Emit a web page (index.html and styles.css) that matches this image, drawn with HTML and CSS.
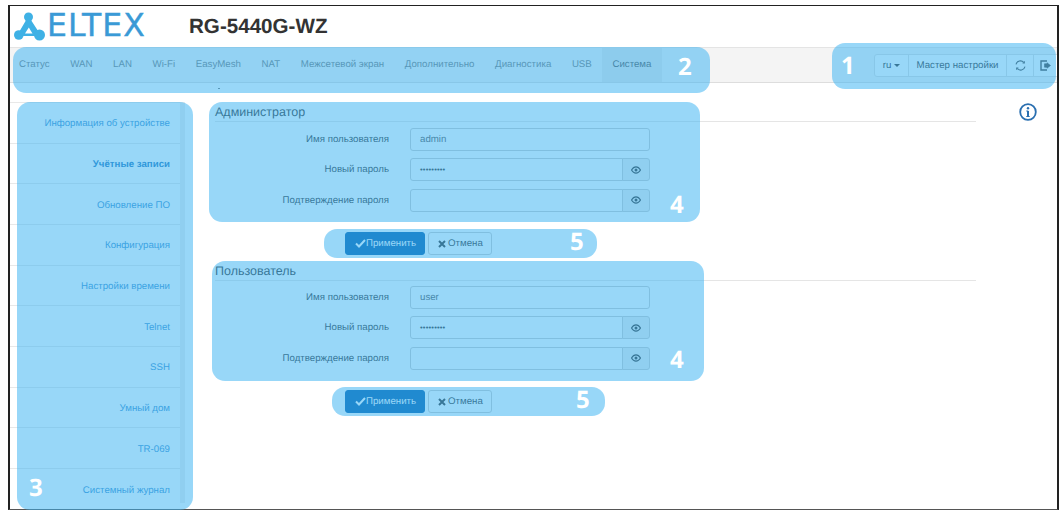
FILE: index.html
```html
<!DOCTYPE html>
<html lang="ru">
<head>
<meta charset="utf-8">
<title>RG-5440G-WZ</title>
<link rel="stylesheet" href="styles.css">
</head>
<body>
<div class="frame">
  <header class="top">
    <div class="logo">
      <svg class="logo-mark" width="32" height="29" viewBox="0 0 32 29">
        <path d="M14.500 6 L4.500 23 H25.500 Z" fill="#3fb1e5" stroke="#3fb1e5" stroke-width="2" stroke-linejoin="round"/>
        <path d="M14.800 15.500 11 21.500H18.500Z" fill="#fff"/>
        <g fill="#3fb1e5"><circle cx="14.500" cy="5" r="4.500"/><circle cx="4.800" cy="23" r="4.800"/><circle cx="25.500" cy="23" r="5.500"/></g>
      </svg>
      <span class="logo-text">ELTEX</span>
    </div>
    <h1 class="model">RG-5440G-WZ</h1>
  </header>

  <nav class="navbar">
    <ul class="tabs">
      <li>Статус</li><li>WAN</li><li>LAN</li><li>Wi-Fi</li><li>EasyMesh</li><li>NAT</li><li>Межсетевой экран</li><li>Дополнительно</li><li>Диагностика</li><li>USB</li><li class="active">Система</li>
    </ul>
    <div class="tools">
      <span class="tool lang">ru <i class="caret"></i></span>
      <span class="tool wizard">Мастер настройки</span>
      <span class="tool icon refresh">
        <svg width="11" height="11" viewBox="0 0 11 11" fill="none" stroke="#444" stroke-width="1.100"><path d="M1 4.300A4.500 4.500 0 0 1 8.800 2.500"/><path d="M10 6.700A4.500 4.500 0 0 1 2.200 8.500"/><path d="M9.300 1.300v1.700H7.600"/><path d="M1.700 9.700V8h1.700"/></svg>
      </span>
      <span class="tool icon logout">
        <svg width="12" height="11" viewBox="0 0 12 11" fill="none" stroke="#444" stroke-width="1.400"><path d="M7 1H1v9h6"/><path d="M7 3.800v-1l3.500 2.700L7 8.200v-1H4.500V3.800Z" fill="#444" stroke-width=".6"/></svg>
      </span>
    </div>
  </nav>

  <div class="main">
    <i class="speck"></i>
    <aside class="side">
      <a>Информация об устройстве</a>
      <a class="current">Учётные записи</a>
      <a>Обновление ПО</a>
      <a>Конфигурация</a>
      <a>Настройки времени</a>
      <a>Telnet</a>
      <a>SSH</a>
      <a>Умный дом</a>
      <a>TR-069</a>
      <a>Системный журнал</a>
    </aside>

    <section class="content">
      <form class="panel">
        <h2 class="legend">Администратор</h2>
        <div class="row"><label>Имя пользователя</label><div class="field">admin</div></div>
        <div class="row"><label>Новый пароль</label><div class="group"><div class="field dots">•••••••••</div><span class="addon"><svg class="eye" width="10" height="8" viewBox="0 0 10 8"><use href="#eye"/></svg></span></div></div>
        <div class="row"><label>Подтверждение пароля</label><div class="group"><div class="field"></div><span class="addon"><svg class="eye" width="10" height="8" viewBox="0 0 10 8"><use href="#eye"/></svg></span></div></div>
        <div class="actions">
          <span class="btn primary"><svg width="11" height="9" viewBox="0 0 11 9" fill="none" stroke="#fff" stroke-width="2"><path d="M1 4.500 4 7.500 10 1"/></svg>Применить</span>
          <span class="btn"><svg width="8" height="8" viewBox="0 0 8 8" fill="none" stroke="#333" stroke-width="2"><path d="M1 1 7 7M7 1 1 7"/></svg>Отмена</span>
        </div>
      </form>
      <form class="panel second">
        <h2 class="legend">Пользователь</h2>
        <div class="row"><label>Имя пользователя</label><div class="field">user</div></div>
        <div class="row"><label>Новый пароль</label><div class="group"><div class="field dots">•••••••••</div><span class="addon"><svg class="eye" width="10" height="8" viewBox="0 0 10 8"><use href="#eye"/></svg></span></div></div>
        <div class="row"><label>Подтверждение пароля</label><div class="group"><div class="field"></div><span class="addon"><svg class="eye" width="10" height="8" viewBox="0 0 10 8"><use href="#eye"/></svg></span></div></div>
        <div class="actions">
          <span class="btn primary"><svg width="11" height="9" viewBox="0 0 11 9" fill="none" stroke="#fff" stroke-width="2"><path d="M1 4.500 4 7.500 10 1"/></svg>Применить</span>
          <span class="btn"><svg width="8" height="8" viewBox="0 0 8 8" fill="none" stroke="#333" stroke-width="2"><path d="M1 1 7 7M7 1 1 7"/></svg>Отмена</span>
        </div>
      </form>
    </section>

    <svg class="info" width="18" height="18" viewBox="0 0 18 18" fill="none">
      <circle cx="9" cy="9" r="7.800" stroke="#2a6fb0" stroke-width="1.800"/>
      <circle cx="9" cy="5.200" r="1.200" fill="#2a6fb0"/>
      <path d="M9 8v5.500" stroke="#2a6fb0" stroke-width="2"/><path d="M7.300 8h2M7.300 13.500h3.400" stroke="#2a6fb0" stroke-width="1"/>
    </svg>
  </div>

  <svg class="defs" width="0" height="0"><defs><g id="eye"><path d="M.5 4C2 1.500 3.500.8 5 .8S8 1.500 9.500 4C8 6.500 6.500 7.200 5 7.200S2 6.500.5 4Z" fill="none" stroke="#333" stroke-width="1.200"/><circle cx="5" cy="4" r="1.500" fill="#333"/></g></defs></svg>
</div>

<div class="mark mark-1"><b>1</b></div>
<div class="mark mark-2"><b>2</b></div>
<div class="mark mark-3"><b>3</b></div>
<div class="mark mark-4a"><b>4</b></div>
<div class="mark mark-5a"><b>5</b></div>
<div class="mark mark-4b"><b>4</b></div>
<div class="mark mark-5b"><b>5</b></div>
</body>
</html>
```
FILE: styles.css
```css
* { box-sizing: border-box; }
html, body { margin: 0; padding: 0; background: #fff; }
body {
  width: 1063px; height: 511px; overflow: hidden; position: relative;
  font-family: "Liberation Sans", Arial, sans-serif; font-size: 9.700px; color: #333;
  text-rendering: geometricPrecision;
}
.frame {
  position: absolute; left: 8px; top: 5px; width: 1051px; height: 505px;
  border: 1px solid #222; border-bottom-color: #555; border-right-width: 2px; border-left-width: 2px; overflow: hidden;
}
.top { height: 41px; display: flex; align-items: center; padding: 0 0 0 4px; }
.logo { width: 175px; flex: none; display: flex; align-items: center; gap: 1px; }
.logo-mark { flex: none; }
.logo-text { font-family: "DejaVu Sans", sans-serif; font-size: 31.500px; letter-spacing: 1px; color: #3a9ad6; line-height: 1; -webkit-text-stroke: .4px #3a9ad6; }
.model { margin: 0; font-size: 20.600px; font-weight: bold; color: #333; }
.navbar {
  height: 36px; background: #f4f4f4; border-top: 1px solid #e4e4e4; border-bottom: 1px solid #ddd;
  display: flex; justify-content: space-between; align-items: stretch;
}
.tabs { list-style: none; margin: 0; padding: 0; display: flex; }
.tabs li { padding: 0 10.300px; line-height: 34px; color: #777; white-space: nowrap; }
.tabs li:first-child { padding-left: 9px; }
.tabs li.active { background: #e7e7e7; color: #555; }
.tools { display: flex; align-items: center; height: 34px; }
.tool {
  height: 23px; display: flex; align-items: center; justify-content: center; background: #fff; border: 1px solid #ddd; margin-left: -1px; color: #333; white-space: nowrap;
}
.lang { width: 35px; border-radius: 3px 0 0 3px; }
.wizard { width: 99px; }
.refresh { width: 28px; }
.logout { width: 24px; border-right: 0; }
.caret { display: inline-block; margin-left: 3px; border: 3px solid transparent; border-top-color: #333; border-bottom: 0; }
.main { display: flex; position: relative; height: 423px; }
.speck { position: absolute; left: 208px; top: 5px; width: 2px; height: 1px; background: #777; }
.side { width: 175px; height: 401px; flex: none; margin-top: 19px; border-right: 5px solid #eee; border-top: 1px solid #e8e8e8; display: flex; flex-direction: column; }
.side a {
  height: 40.670px; flex: none; display: flex; align-items: center; justify-content: flex-end;
  padding: 2px 10px 0 0; color: #3a8fd0; border-bottom: 1px solid #e8e8e8;
}
.side a:last-child { border-bottom: 0; }
.side a.current { font-weight: bold; color: #1e78c0; }
.content { width: 791px; flex: none; padding: 17px 0 0 30px; }
.panel { display: flex; flex-direction: column; }
.panel.second { margin-top: 3.500px; }
.legend { margin: 0 0 5.500px; height: 22px; padding-top: 3px; border-bottom: 1px solid #e5e5e5; font-size: 12.500px; font-weight: normal; color: #333; line-height: 18px; }
.second .legend { margin-bottom: 5px; }
.row { display: flex; align-items: center; gap: 21px; height: 23px; }
.row + .row { margin-top: 7.500px; }
.row label { width: 174px; flex: none; text-align: right; color: #333; }
.row > .field, .group { width: 240px; }
.field { height: 23px; border: 1px solid #ccc; border-radius: 3px; background: #fff; padding: 0 9px; line-height: 21px; color: #555; }
.group { display: flex; }
.group .field { flex: 1; border-radius: 3px 0 0 3px; }
.field.dots { font-size: 7.500px; letter-spacing: .2px; color: #333; }
.addon { width: 28px; flex: none; height: 23px; margin-left: -1px; background: #eee; border: 1px solid #ccc; border-radius: 0 3px 3px 0; display: flex; align-items: center; justify-content: center; }
.actions { display: flex; gap: 3px; margin: 20.500px 0 0 130px; }
.btn { height: 23px; display: inline-flex; align-items: center; gap: 2px; padding: 0 8px 0 9px; border: 1px solid #ccc; border-radius: 3px; background: #fff; color: #333; white-space: nowrap; }
.btn.primary { background: #005baa; border-color: #005baa; color: #fff; gap: 0; }
.info { position: absolute; top: 20px; left: 1009px; }
.defs { position: absolute; }
.mark { position: absolute; background: rgba(61, 180, 242, .53); border-radius: 13px; color: #fff; font-family: "Open Sans", sans-serif; font-size: 24px; }
.mark b { position: absolute; line-height: 1; font-weight: 700; }
.mark-1 { left: 832px; top: 43px; width: 224px; height: 46px; }
.mark-1 b { left: 9px; top: 11px; }
.mark-2 { left: 13px; top: 47px; width: 697px; height: 46px; }
.mark-2 b { left: 665px; top: 8px; }
.mark-3 { left: 17px; top: 102px; width: 176px; height: 408px; }
.mark-3 b { left: 12px; top: 374px; }
.mark-4a { left: 209px; top: 102px; width: 491px; height: 120px; }
.mark-4a b { left: 461px; top: 91px; }
.mark-5a { left: 324px; top: 229px; width: 273px; height: 29px; }
.mark-5a b { left: 246px; top: 1px; }
.mark-4b { left: 212px; top: 261px; width: 492px; height: 120px; }
.mark-4b b { left: 458px; top: 87px; }
.mark-5b { left: 332px; top: 387px; width: 273px; height: 29px; }
.mark-5b b { left: 244px; top: 1px; }
```
